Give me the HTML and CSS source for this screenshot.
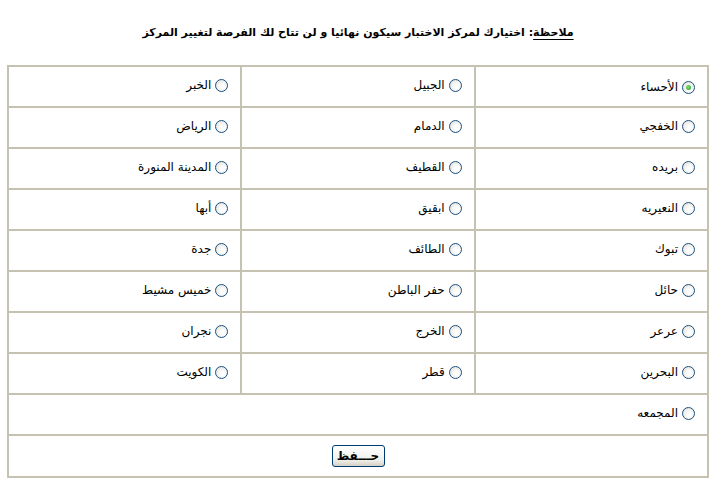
FILE: index.html
```html
<!DOCTYPE html>
<html lang="ar" dir="rtl">
<head>
  <meta charset="UTF-8" />
  <title>اختيار المركز</title>
  <link rel="stylesheet" href="styles.css">
</head>
<body>

  <p class="note"><u>ملاحظة</u>: اختيارك لمركز الاختبار سيكون نهائيا و لن تتاح لك الفرصة لتغيير المركز</p>

  <form class="centers">
    <table class="grid">
      <tr>
        <td><label><input type="radio" name="center" checked /> الأحساء</label></td>
        <td><label><input type="radio" name="center" /> الجبيل</label></td>
        <td><label><input type="radio" name="center" /> الخبر</label></td>
      </tr>
      <tr>
        <td><label><input type="radio" name="center" /> الخفجي</label></td>
        <td><label><input type="radio" name="center" /> الدمام</label></td>
        <td><label><input type="radio" name="center" /> الرياض</label></td>
      </tr>
      <tr>
        <td><label><input type="radio" name="center" /> بريده</label></td>
        <td><label><input type="radio" name="center" />  القطيف</label></td>
        <td><label><input type="radio" name="center" /> المدينة المنورة</label></td>
      </tr>
      <tr>
        <td><label><input type="radio" name="center" /> النعيريه</label></td>
        <td><label><input type="radio" name="center" /> ابقيق</label></td>
        <td><label><input type="radio" name="center" /> أبها</label></td>
      </tr>
      <tr>
        <td><label><input type="radio" name="center" /> تبوك</label></td>
        <td><label><input type="radio" name="center" /> الطائف</label></td>
        <td><label><input type="radio" name="center" />  جدة</label></td>
      </tr>
      <tr>
        <td><label><input type="radio" name="center" /> حائل</label></td>
        <td><label><input type="radio" name="center" /> حفر الباطن</label></td>
        <td><label><input type="radio" name="center" /> خميس مشيط</label></td>
      </tr>
      <tr>
        <td><label><input type="radio" name="center" /> عرعر</label></td>
        <td><label><input type="radio" name="center" /> الخرج</label></td>
        <td><label><input type="radio" name="center" /> نجران</label></td>
      </tr>
      <tr>
        <td><label><input type="radio" name="center" /> البحرين</label></td>
        <td><label><input type="radio" name="center" /> قطر</label></td>
        <td><label><input type="radio" name="center" /> الكويت</label></td>
      </tr>
      <tr>
        <td colspan="3"><label><input type="radio" name="center" /> المجمعه</label></td>
      </tr>
      <tr>
        <td colspan="3" class="submit-cell"><button type="submit" class="save">حـــفظ</button></td>
      </tr>
    </table>
  </form>

</body>
</html>
```

FILE: styles.css
```css
:root {
  --line: #c6c2b2;
}

body {
  margin: 0;
  padding: 0;
  background: #fff;
  color: #000;
  font-family: "DejaVu Sans", sans-serif;
}

.note {
  margin: 0;
  padding: 24px 0 23px;
  text-align: center;
  font-size: 11px;
  font-weight: bold;
  line-height: 18px;
}

.note u {
  text-underline-offset: 3px;
}

.centers {
  margin: 0 7px;
}

.grid {
  width: 100%;
  border-collapse: collapse;
  border: 2px solid var(--line);
  table-layout: fixed;
}

.grid td {
  border: 2px solid var(--line);
  padding: 0 12px;
  height: 39px;
  font-size: 12px;
  text-align: right;
  white-space: nowrap;
  vertical-align: middle;
}

.grid label {
  display: inline-flex;
  align-items: center;
  gap: 4px;
  height: 15px;
  line-height: 15px;
}

.grid input[type="radio"] {
  appearance: none;
  margin: 0;
  width: 13px;
  height: 13px;
  border: 1px solid #1c5180;
  border-radius: 50%;
  background: radial-gradient(circle at 60% 60%, #ffffff 20%, #dcdad2 100%);
  display: inline-grid;
  place-content: center;
}

.grid input[type="radio"]:checked::before {
  content: "";
  width: 5px;
  height: 5px;
  border-radius: 50%;
  background: radial-gradient(circle at 40% 40%, #7ce07c, #21a121);
}

.grid .submit-cell {
  text-align: center;
  padding: 0;
  height: 40px;
}

.save {
  font-family: "DejaVu Sans", sans-serif;
  font-size: 12px;
  font-weight: bold;
  width: 53px;
  height: 22px;
  padding: 0;
  border: 1px solid #003c74;
  border-radius: 3px;
  background: linear-gradient(#ffffff, #f0f0ea 70%, #d6d0c5);
  color: #000;
  cursor: pointer;
}
```
